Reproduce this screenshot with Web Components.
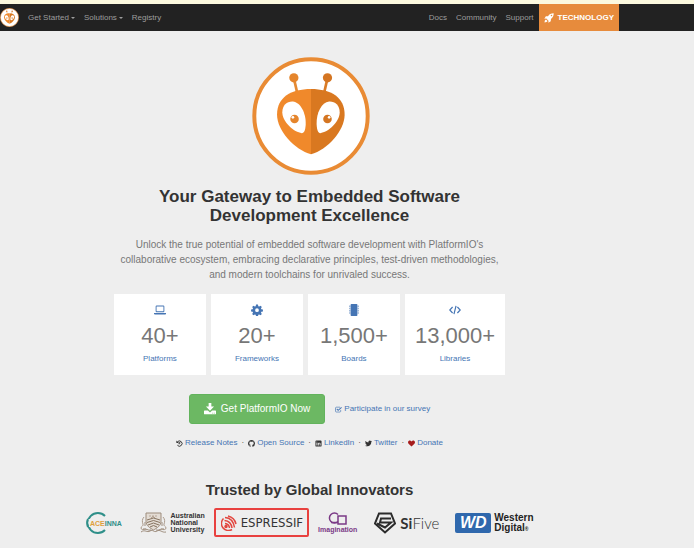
<!DOCTYPE html>
<html lang="en">
<head>
<meta charset="utf-8">
<title>PlatformIO</title>
<style>
  body {
    margin: 0;
    background: #eee;
    color: #333;
    font-family: "Liberation Sans", Arial, sans-serif;
    font-size: 8px;
    line-height: 12px;
    --link: #4575b4;
    --orange: #e78b3c;
    --side: 75px;
  }
  main {
    display: flex;
    flex-direction: column;
    align-items: center;
    margin-right: var(--side);
    padding-top: 26px;
  }
  .mascot { width: 120px; height: 118px; }
  h1, h2 { margin: 0; text-align: center; }
  h1 { max-width: 391px; margin-top: 12px; font-size: 17px; line-height: 19px; }
  h2 { margin-top: 31px; font-size: 15px; line-height: 20px; }
  .lead {
    max-width: 391px;
    margin: 12px 0;
    color: #777;
    font-size: 10px;
    line-height: 15px;
    text-align: center;
  }
  .stats { display: flex; gap: 5px; }
  .actions { display: flex; align-items: center; gap: 10px; margin-top: 19px; }
  .links { display: flex; align-items: center; gap: 4px; margin-top: 13px; }
  .brands { display: flex; align-items: center; gap: 9px; margin-top: 8px; }
</style>
</head>
<body>
  <pio-navbar></pio-navbar>
  <main>
    <pio-mascot class="mascot"></pio-mascot>
    <h1>Your Gateway to Embedded Software Development Excellence</h1>
    <p class="lead">Unlock the true potential of embedded software development with PlatformIO's collaborative ecosystem, embracing declarative principles, test-driven methodologies, and modern toolchains for unrivaled success.</p>
    <div class="stats">
      <pio-stat icon="laptop" value="40+">Platforms</pio-stat>
      <pio-stat icon="gear" value="20+">Frameworks</pio-stat>
      <pio-stat icon="board" value="1,500+">Boards</pio-stat>
      <pio-stat icon="code" value="13,000+">Libraries</pio-stat>
    </div>
    <div class="actions">
      <pio-button icon="download">Get PlatformIO Now</pio-button>
      <pio-link icon="check" tint>Participate in our survey</pio-link>
    </div>
    <div class="links">
      <pio-link icon="history">Release Notes</pio-link><span>·</span>
      <pio-link icon="github">Open Source</pio-link><span>·</span>
      <pio-link icon="linkedin">LinkedIn</pio-link><span>·</span>
      <pio-link icon="twitter">Twitter</pio-link><span>·</span>
      <pio-link icon="heart">Donate</pio-link>
    </div>
    <h2>Trusted by Global Innovators</h2>
    <div class="brands">
      <brand-aceinna></brand-aceinna>
      <brand-anu></brand-anu>
      <brand-espressif></brand-espressif>
      <brand-imagination></brand-imagination>
      <brand-sifive></brand-sifive>
      <brand-wd></brand-wd>
    </div>
  </main>

<script>
// All icons share a 16x16 grid
const ICONS = {
  rocket: '<path d="M15.5.5C11.5.4 8.6 2 6.5 5L3 5.3.5 9l3.2-.2 3.5 3.5L7 15.5l3.8-2.5.3-3.5c3-2.1 4.5-5 4.4-9zM12 5.2A1.2 1.2 0 1 1 12 2.8a1.2 1.2 0 0 1 0 2.4z"/><path d="M3.2 10.5C1.5 11.2 1 13 .8 15.2c2.2-.2 4-.7 4.7-2.4z"/>',
  laptop: '<path fill-rule="evenodd" d="M3.5 2h9c.8 0 1.3.5 1.3 1.3v6.4c0 .8-.5 1.3-1.3 1.3h-9c-.8 0-1.3-.5-1.3-1.3V3.3C2.2 2.5 2.7 2 3.5 2zm-.1 1.2v6.600h9.200V3.200zM0 12h16v1c0 .7-.6 1-1.300 1H1.300C.6 14 0 13.700 0 13z"/>',
  gear: '<path fill-rule="evenodd" d="M6.700.8h2.600l.4 2.100 1.200.5 1.800-1.200 1.800 1.800-1.200 1.800.5 1.200 2.100.4v2.500l-2.100.4-.5 1.200 1.200 1.800-1.800 1.800-1.800-1.200-1.200.5-.4 2.100H6.700l-.4-2.100-1.200-.5-1.800 1.200-1.800-1.800 1.200-1.800-.5-1.200-2.100-.4V7.400L2.200 7l.5-1.200L1.500 4l1.800-1.800 1.800 1.200 1.200-.5zM8 5.700a2.500 2.500 0 1 0 0 5 2.500 2.500 0 0 0 0-5z"/>',
  board: '<rect x="3.500" y="0" width="9" height="16" rx="1"/><path d="M2 2h1v2H2zm0 3h1v2H2zm0 3h1v2H2zm0 3h1v2H2zm11-9h1v2h-1zm0 3h1v2h-1zm0 3h1v2h-1zm0 3h1v2h-1z"/>',
  code: '<path fill="none" stroke="currentColor" stroke-width="1.600" d="M4.800 4 1 8l3.800 4M11.200 4 15 8l-3.800 4M9.400 2.500l-2.800 11"/>',
  download: '<path d="M6.200 0h3.600v4.800h3.600L8 10.200 2.600 4.800h3.600z"/><path fill-rule="evenodd" d="M.8 10h4.400L8 12.600 10.800 10h4.400c.5 0 .8.300.8.800v3.400c0 .5-.3.800-.8.800H.8c-.5 0-.8-.3-.8-.8v-3.400c0-.5.3-.8.800-.8zm10.400 3v1h1v-1zm2 0v1h1v-1z"/>',
  check: '<path fill="none" stroke="currentColor" stroke-width="1.500" d="M13 9v3c0 1-.8 1.800-1.800 1.800H3c-1 0-1.800-.8-1.800-1.800V4.500c0-1 .8-1.800 1.800-1.800h8.500"/><path fill="none" stroke="currentColor" stroke-width="2.300" d="m4 6.800 3.200 3.200L15 3"/>',
  history: '<path fill="none" stroke="currentColor" stroke-width="2.200" d="M3 4.600A6 6 0 1 1 3.200 12M8.500 4.500v4H5.600"/><path d="M.8 1v6h6z"/>',
  github: '<path d="M8 0C3.580 0 0 3.580 0 8c0 3.540 2.290 6.530 5.470 7.590.4.070.55-.17.55-.38 0-.19-.01-.82-.01-1.490-2.010.37-2.530-.49-2.690-.94-.09-.23-.48-.94-.82-1.130-.28-.15-.68-.52-.01-.53.63-.01 1.080.58 1.230.82.72 1.210 1.870.87 2.330.66.070-.52.28-.87.51-1.070-1.780-.2-3.640-.89-3.640-3.950 0-.87.31-1.590.82-2.150-.08-.2-.36-1.020.08-2.120 0 0 .67-.21 2.200.82.64-.18 1.320-.27 2-.27s1.360.09 2 .27c1.530-1.040 2.200-.82 2.200-.82.44 1.100.16 1.920.08 2.120.51.56.82 1.270.82 2.150 0 3.070-1.870 3.750-3.650 3.950.29.25.54.73.54 1.480v2.200c0 .21.15.46.55.38A8 8 0 0 0 16 8c0-4.420-3.580-8-8-8z"/>',
  linkedin: '<path fill-rule="evenodd" d="M3 1h10c1.200 0 2 .8 2 2v10c0 1.200-.8 2-2 2H3c-1.200 0-2-.8-2-2V3c0-1.200.8-2 2-2zm.3 5.400v6.300h2V6.400zM4.300 3.200a1.100 1.100 0 1 0 0 2.200 1.100 1.100 0 0 0 0-2.200zM6.600 6.400v6.300h2V9c0-2 2.100-2 2.100 0v3.700h2V8.900c0-3-2.800-3.400-4.100-1.700v-.8z"/>',
  twitter: '<path transform="scale(.667)" d="M23.953 4.570a10 10 0 0 1-2.825.775 4.958 4.958 0 0 0 2.163-2.723c-.951.555-2.005.959-3.127 1.184a4.920 4.920 0 0 0-8.384 4.482C7.690 8.095 4.067 6.130 1.640 3.162a4.822 4.822 0 0 0-.666 2.475c0 1.710.87 3.213 2.188 4.096a4.904 4.904 0 0 1-2.228-.616v.06a4.923 4.923 0 0 0 3.946 4.827 4.996 4.996 0 0 1-2.212.085 4.936 4.936 0 0 0 4.604 3.417 9.867 9.867 0 0 1-6.102 2.105c-.39 0-.779-.023-1.170-.067a13.995 13.995 0 0 0 7.557 2.209c9.053 0 13.998-7.496 13.998-13.985 0-.21 0-.42-.015-.63A9.935 9.935 0 0 0 24 4.590z"/>',
  heart: '<path fill="#a61c1c" d="M8 15 1.300 8.300C-.5 6.300-.3 3.500 1.500 2 3.500.4 6.400.8 8 3.300 9.600.8 12.500.4 14.500 2c1.800 1.500 2 4.300.2 6.300z"/>'
};

const icon = (name) =>
  `<svg class="icon" viewBox="0 0 16 16" fill="currentColor" aria-hidden="true">${ICONS[name] || ""}</svg>`;

class PioMascot extends HTMLElement {
  constructor() {
    super();
    this.attachShadow({ mode: "open" }).innerHTML = `
      <style>
        :host { display: block; }
        svg { display: block; width: 100%; height: 100%; }
      </style>
      <svg viewBox="36 20 358 358" preserveAspectRatio="xMaxYMid meet" role="img" aria-label="PlatformIO">
        <circle cx="215" cy="199" r="172" fill="#fff" stroke="#e98b34" stroke-width="12"/>
        <path d="M163 84l10 44" stroke="#e58a33" stroke-width="8"/>
        <path d="M265 84l-10 44" stroke="#d97b26" stroke-width="8"/>
        <circle cx="163" cy="83" r="14" fill="#e5852c"/>
        <circle cx="265" cy="83" r="14" fill="#d47522"/>
        <path d="M215 117C154 117 112 142 112 195C112 243 165 301 215 315z" fill="#f0892b"/>
        <path d="M215 117C276 117 317 142 317 195C317 243 265 301 215 315z" fill="#d97820"/>
        <path d="M160 155C183 157 200 190 199 224C198 242 194 251 187 251C164 249 128 218 128 188C128 165 143 154 160 155z" fill="#fff"/>
        <path d="M270 155C247 157 231 190 232 224C233 242 237 251 243 251C266 249 302 218 302 188C302 165 287 154 270 155z" fill="#fff"/>
        <circle cx="165" cy="208" r="13" fill="#e5852c"/>
        <circle cx="265" cy="208" r="13" fill="#d47522"/>
        <circle cx="160" cy="203" r="4" fill="#fff"/>
        <circle cx="270" cy="203" r="4" fill="#fff"/>
      </svg>`;
  }
}
customElements.define("pio-mascot", PioMascot);

class PioNavbar extends HTMLElement {
  constructor() {
    super();
    this.attachShadow({ mode: "open" }).innerHTML = `
      <style>
        :host { display: block; border-top: 4px solid #fcf9df; background: #222; }
        nav {
          display: flex;
          align-items: center;
          gap: 9px;
          height: 27px;
          margin-right: var(--side);
        }
        pio-mascot { width: 19px; height: 19px; }
        a, button { color: #9d9d9d; font: inherit; text-decoration: none; }
        button {
          display: flex;
          align-items: center;
          gap: 2px;
          padding: 0;
          border: 0;
          background: none;
        }
        button::after {
          content: "";
          border: 2px solid transparent;
          border-top-color: currentColor;
          border-bottom: 0;
        }
        .right { display: flex; align-items: center; gap: 9px; margin-left: auto; }
        .tech {
          display: flex;
          align-items: center;
          gap: 4px;
          margin-left: -4px;
          padding: 0 5px;
          background: var(--orange);
          color: #fff;
          font-weight: bold;
          line-height: 27px;
        }
        .icon { width: 10px; height: 10px; }
      </style>
      <nav>
        <pio-mascot></pio-mascot>
        <button type="button">Get Started</button>
        <button type="button">Solutions</button>
        <a href="#">Registry</a>
        <div class="right">
          <a href="#">Docs</a>
          <a href="#">Community</a>
          <a href="#">Support</a>
          <a href="#" class="tech">${icon("rocket")}TECHNOLOGY</a>
        </div>
      </nav>`;
  }
}
customElements.define("pio-navbar", PioNavbar);

class PioStat extends HTMLElement {
  connectedCallback() {
    this.attachShadow({ mode: "open" }).innerHTML = `
      <style>
        :host { display: block; min-width: 92px; background: #fff; text-align: center; }
        a {
          display: flex;
          flex-direction: column;
          align-items: center;
          padding: 10px;
          color: var(--link);
          text-decoration: none;
        }
        .icon { width: 12px; height: 12px; }
        .value { margin: 7px 0 4px; color: #777; font-size: 22px; line-height: 26px; }
      </style>
      <a href="#">
        ${icon(this.getAttribute("icon"))}
        <span class="value">${this.getAttribute("value")}</span>
        <slot></slot>
      </a>`;
  }
}
customElements.define("pio-stat", PioStat);

class PioButton extends HTMLElement {
  connectedCallback() {
    this.attachShadow({ mode: "open" }).innerHTML = `
      <style>
        :host { display: block; }
        button {
          display: flex;
          align-items: center;
          gap: 5px;
          height: 30px;
          padding: 0 14px;
          border: 1px solid #62b35c;
          border-radius: 3px;
          background: #6cb863;
          color: #fff;
          font: inherit;
          font-size: 10px;
        }
        .icon { width: 12px; height: 12px; }
      </style>
      <button type="button">${icon(this.getAttribute("icon"))}<slot></slot></button>`;
  }
}
customElements.define("pio-button", PioButton);

class PioLink extends HTMLElement {
  connectedCallback() {
    this.attachShadow({ mode: "open" }).innerHTML = `
      <style>
        :host { display: block; color: #333; }
        :host([tint]) { color: var(--link); }
        a { display: flex; align-items: center; gap: 2px; color: inherit; text-decoration: none; }
        span { color: var(--link); }
        .icon { width: 7px; height: 7px; }
      </style>
      <a href="#">${icon(this.getAttribute("icon"))}<span><slot></slot></span></a>`;
  }
}
customElements.define("pio-link", PioLink);

// Customer logos
const brand = (tag, markup, styles) => {
  customElements.define(tag, class extends HTMLElement {
    constructor() {
      super();
      this.attachShadow({ mode: "open" }).innerHTML = `
        <style>
          :host { display: flex; align-items: center; }
          svg { display: block; flex: none; }
          ${styles}
        </style>${markup}`;
    }
  });
};

brand("brand-aceinna", `
  <svg width="40" height="24" viewBox="0 0 40 24">
    <path d="M20 5A10 10 0 1 0 20 19" fill="none" stroke="#2f8f89" stroke-width="2"/>
    <path d="M2 8h30v8H4z" fill="#eee"/>
    <path d="M3 8A10 10 0 0 0 3 16" fill="none" stroke="#2f8f89" stroke-width="2"/>
    <text x="5" y="15" font-size="7" font-weight="bold" fill="#dfa03c">ACE<tspan fill="#2f8f89">INNA</tspan></text>
  </svg>`, `:host { margin-right: 6px; }`);

brand("brand-anu", `
  <svg width="27" height="22" viewBox="0 0 27 22" fill="none" stroke="#9d8c7c" stroke-width="1">
    <path d="M6 1h15v8c0 5-4 7-7.500 9C10 16 6 14 6 9z" fill="#e3dcd4"/>
    <path d="M9 4h2m4 0h2M13 3v3M11 6l2-2 2 2" stroke="#b7a697"/>
    <path d="M7 8l6.500-2L20 8M7 10.500l6.500-2 6.500 2M8 13l5.500-2 5.500 2M10 15l3.500-1.500L17 15" stroke="#86735f"/>
    <path d="M4 5c-2 2-2 5-1 7s-2 2-2 4 3 2 5 1M23 5c2 2 2 5 1 7s2 2 2 4-3 2-5 1" stroke="#ab9a8b"/>
    <path d="M1 20c4-3 6 1 9-1s4 2 7 0 5 2 9 1M3 17c3-1 5 2 8 1m5 0c3 1 5-2 8-1M5 10v4m17-4v4"/>
  </svg>
  <div>Australian<br>National<br>University</div>`,
  `:host { gap: 3px; } div { font-size: 7px; line-height: 7px; font-weight: bold; color: #333; }`);

brand("brand-espressif", `
  <svg width="16" height="16" viewBox="0 0 16 16" fill="none" stroke="#e2463f" stroke-width="1.500">
    <path d="M2.500 3.500A7 7 0 0 0 11 14.500"/>
    <path d="M4 2.500Q12 3 13.500 12.500M3.500 5.500Q10 6 11 13M4 8.500Q8 9 8.500 13M7 1Q13.500 2.500 15 9"/>
    <circle cx="5" cy="11.500" r="1" fill="#e2463f"/>
  </svg>
  <span>ESPRESSIF</span>`, `
  :host {
    gap: 4px;
    box-sizing: border-box;
    height: 29px;
    padding: 0 4px 0 5px;
    border: 2px solid #e8413f;
    border-radius: 2px;
  }
  span { font-family: "DejaVu Sans Condensed", "DejaVu Sans", sans-serif; font-stretch: condensed; font-size: 13px; color: #333; }`);

brand("brand-imagination", `
  <svg width="22" height="14" viewBox="0 0 22 14" fill="none" stroke="#7b3a86" stroke-width="1.500">
    <path d="M11 9.500A5 5 0 1 1 11 2.500"/>
    <path d="M11 4h8v8h-8z"/>
    <path d="M4 10.500h7"/>
  </svg>
  <span>Imagination</span>`,
  `:host { flex-direction: column; } span { font-size: 7px; line-height: 8px; font-weight: bold; color: #7b3a86; }`);

brand("brand-sifive", `
  <svg width="22" height="22" viewBox="0 0 22 22" fill="none" stroke="#2b2b2b" stroke-width="2">
    <path d="M17 6.500H7L6 10.500h11L11 15.500 3 11.500"/>
    <path d="M5 1.500h12l4 10L11 20.500 1 11.500z"/>
  </svg>
  <span><b>Si</b>Five</span>`,
  `:host { gap: 4px; margin: 0 7px 0 8px; } span { font: 300 15px/20px Lato, sans-serif; color: #333; } b { font-weight: bold; }`);

brand("brand-wd", `
  <span>WD</span>
  <div>Western<br>Digital<small>®</small></div>`, `
  :host { gap: 3px; }
  span {
    width: 36px;
    border-radius: 2px;
    background: #2f68ad;
    color: #fff;
    font-size: 16px;
    line-height: 20px;
    font-weight: bold;
    font-style: italic;
    text-align: center;
  }
  div { font-size: 10px; line-height: 10px; font-weight: bold; color: #222; }
  small { font-size: 5px; line-height: 5px; }`);
</script>
</body>
</html>
